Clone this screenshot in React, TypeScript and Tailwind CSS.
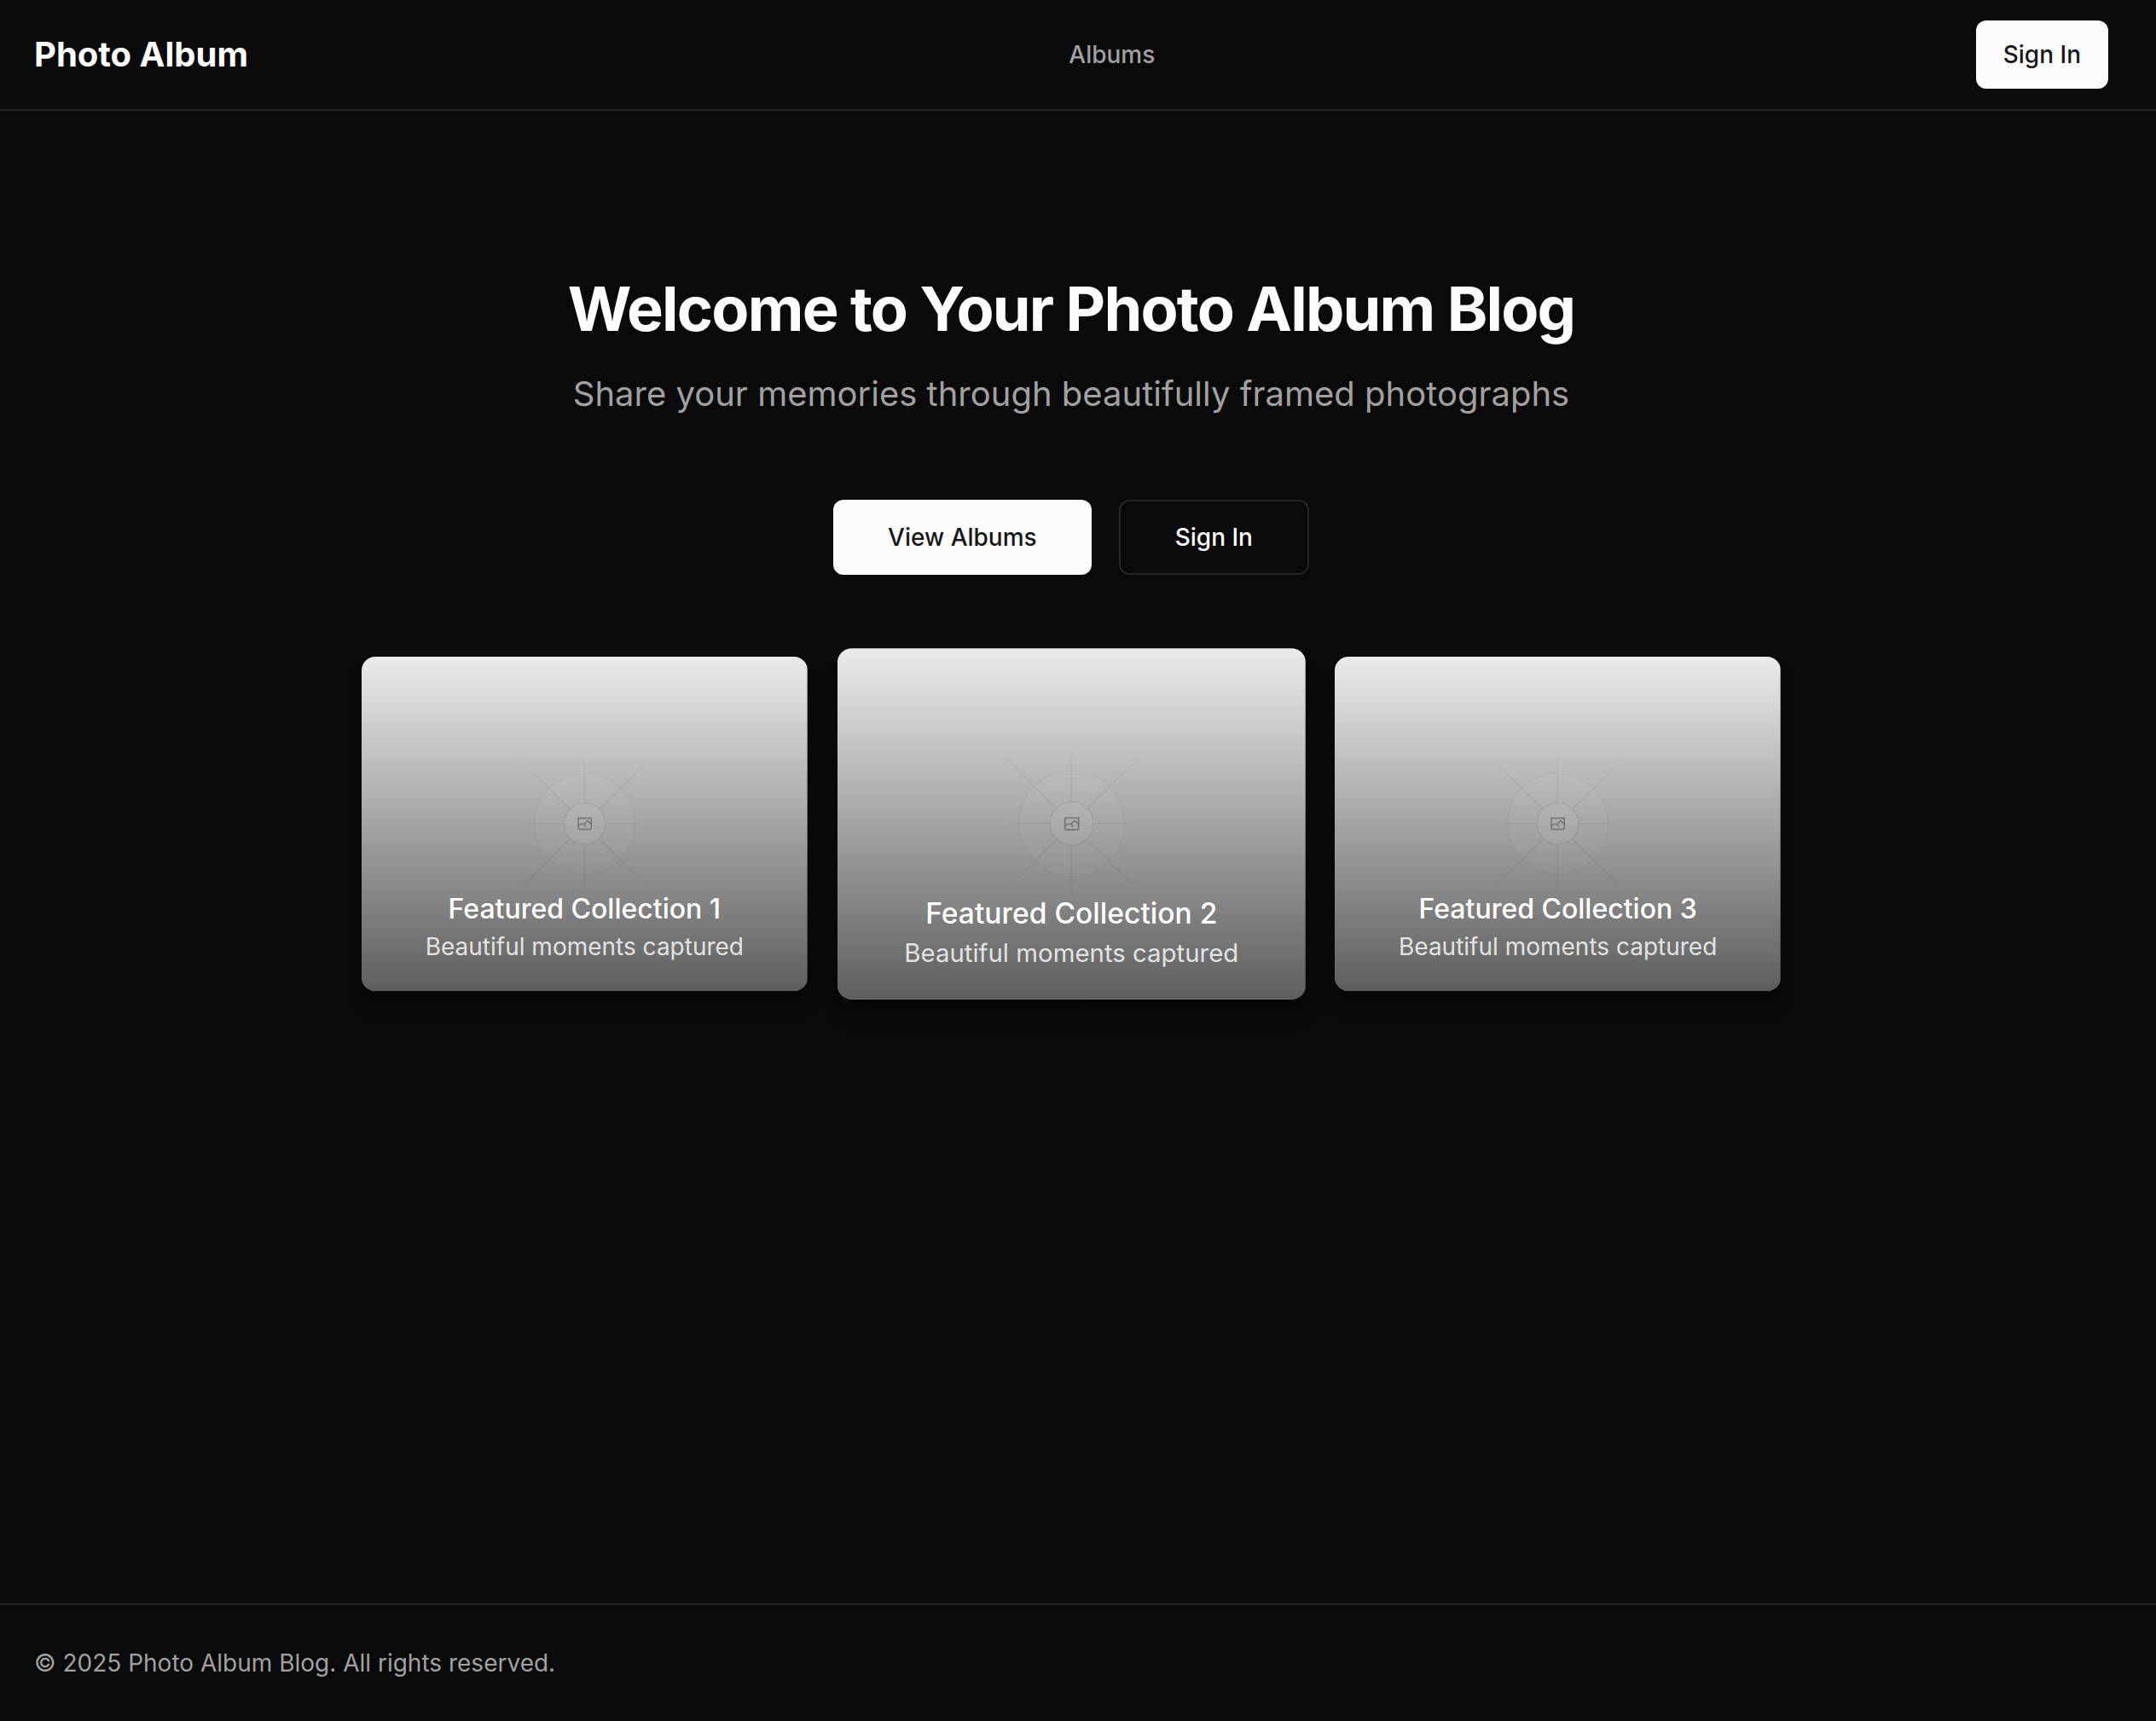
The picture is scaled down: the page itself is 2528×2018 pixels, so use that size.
import { useId } from "react";

const collections = [
  { id: 1, title: "Featured Collection 1", raised: false },
  { id: 2, title: "Featured Collection 2", raised: true },
  { id: 3, title: "Featured Collection 3", raised: false },
];

function FadeStops() {
  return (
    <>
      <stop stopColor="#C9C9C9" stopOpacity="0" />
      <stop offset=".208" stopColor="#C9C9C9" />
      <stop offset=".792" stopColor="#C9C9C9" />
      <stop offset="1" stopColor="#C9C9C9" stopOpacity="0" />
    </>
  );
}

function Placeholder() {
  const id = useId();
  return (
    <svg
      viewBox="0 0 1200 1200"
      preserveAspectRatio="xMidYMid slice"
      fill="none"
      className="absolute inset-0 h-full w-full"
      aria-hidden="true"
    >
      <rect width="1200" height="1200" fill="#EAEAEA" />
      <g opacity=".5">
        <g opacity=".5">
          <circle cx="600.709" cy="599.88" r="136.62" fill="#FAFAFA" />
          <circle cx="600.709" cy="599.88" r="135.41" stroke="#C9C9C9" strokeWidth="2.418" />
        </g>
        <path stroke={`url(#${id}a)`} strokeWidth="2.418" d="m404.8 796.6 391.44-391.44" />
        <path stroke={`url(#${id}b)`} strokeWidth="2.418" d="M404.846 598.671h391.726" />
        <path stroke={`url(#${id}c)`} strokeWidth="2.418" d="M599.5 795.742V404.017" />
        <path stroke={`url(#${id}d)`} strokeWidth="2.418" d="m795.717 796.597-391.441-391.44" />
        <circle cx="600.709" cy="599.88" r="56.825" fill="#fff" />
        <path
          fill="#666"
          fillRule="evenodd"
          clipRule="evenodd"
          d="M616.426 586.58h-31.434v16.176l3.553-3.554.531-.531h9.068l.074-.074 8.463-8.463h2.565l7.18 7.181V586.58Zm-15.715 14.654 3.698 3.699 1.283 1.282-2.565 2.565-1.282-1.283-5.2-5.199h-6.066l-5.514 5.514-.073.073v2.876a2.418 2.418 0 0 0 2.418 2.418h26.598a2.418 2.418 0 0 0 2.418-2.418v-8.317l-8.463-8.463-7.181 7.181-.071.072Zm-19.347 5.442v4.085a6.045 6.045 0 0 0 6.046 6.045h26.598a6.044 6.044 0 0 0 6.045-6.045v-7.108l1.356-1.355-1.282-1.283-.074-.073v-17.989h-38.689v23.38l-.146.146.146.197Z"
        />
        <circle cx="600.709" cy="599.88" r="55.616" stroke="#C9C9C9" strokeWidth="2.418" />
      </g>
      <defs>
        <linearGradient id={`${id}a`} x1="404.8" x2="796.24" y1="796.6" y2="405.16" gradientUnits="userSpaceOnUse">
          <FadeStops />
        </linearGradient>
        <linearGradient id={`${id}b`} x1="796.912" x2="404.507" y1="599.963" y2="599.965" gradientUnits="userSpaceOnUse">
          <FadeStops />
        </linearGradient>
        <linearGradient id={`${id}c`} x1="600.792" x2="600.794" y1="403.677" y2="796.082" gradientUnits="userSpaceOnUse">
          <FadeStops />
        </linearGradient>
        <linearGradient id={`${id}d`} x1="404.85" x2="796.972" y1="403.903" y2="796.02" gradientUnits="userSpaceOnUse">
          <FadeStops />
        </linearGradient>
      </defs>
    </svg>
  );
}

function CollectionCard({ title, raised }: { title: string; raised: boolean }) {
  return (
    <article
      className={
        raised
          ? "relative flex aspect-4/3 scale-105 flex-col justify-end overflow-hidden rounded-2xl shadow-xl"
          : "relative flex aspect-4/3 flex-col justify-end overflow-hidden rounded-2xl shadow-xl"
      }
    >
      <Placeholder />
      <div className="absolute inset-0 bg-linear-to-t/srgb from-black/60 to-transparent" />
      <div className="relative p-8 text-center">
        <h2 className="text-[32px] leading-12 font-medium text-white">{title}</h2>
        <p className="text-[28px] leading-10 text-white/80">Beautiful moments captured</p>
      </div>
    </article>
  );
}

export default function App() {
  return (
    <div className="flex min-h-screen flex-col bg-[#0a0a0a] font-['Inter',sans-serif] text-[#fcfcfc]">
      <header className="border-b-2 border-[#262626]">
        <div className="flex h-32 items-center justify-between pr-14 pl-10">
          <a href="#" className="text-[40px] leading-14 font-bold">
            Photo Album
          </a>
          <nav>
            <a href="#albums" className="text-[28px] leading-10 font-medium text-[#a1a1a1]">
              Albums
            </a>
          </nav>
          <button
            type="button"
            className="h-20 rounded-xl bg-[#fcfcfc] px-8 text-[28px] leading-10 font-medium text-[#171717]"
          >
            Sign In
          </button>
        </div>
      </header>

      <main className="flex flex-1 flex-col items-center gap-24 py-48 pr-4">
        <section className="flex flex-col items-center gap-8 text-center">
          <h1 className="text-7xl leading-20 font-bold tracking-tight">Welcome to Your Photo Album Blog</h1>
          <p className="text-[40px] leading-14 text-[#a1a1a1]">
            Share your memories through beautifully framed photographs
          </p>
        </section>

        <div className="flex gap-8">
          <button
            type="button"
            className="h-22 rounded-xl bg-[#fcfcfc] px-16 text-[28px] leading-10 font-medium text-[#171717]"
          >
            View Albums
          </button>
          <button
            type="button"
            className="h-22 rounded-xl border-2 border-[#262626] px-16 text-[28px] leading-10 font-medium"
          >
            Sign In
          </button>
        </div>

        <section id="albums" className="grid w-full max-w-[1664px] grid-cols-3 gap-12">
          {collections.map((c) => (
            <CollectionCard key={c.id} title={c.title} raised={c.raised} />
          ))}
        </section>
      </main>

      <footer className="border-t-2 border-[#262626] px-10 py-12">
        <p className="text-[28px] leading-10 text-[#a1a1a1]">© 2025 Photo Album Blog. All rights reserved.</p>
      </footer>
    </div>
  );
}
